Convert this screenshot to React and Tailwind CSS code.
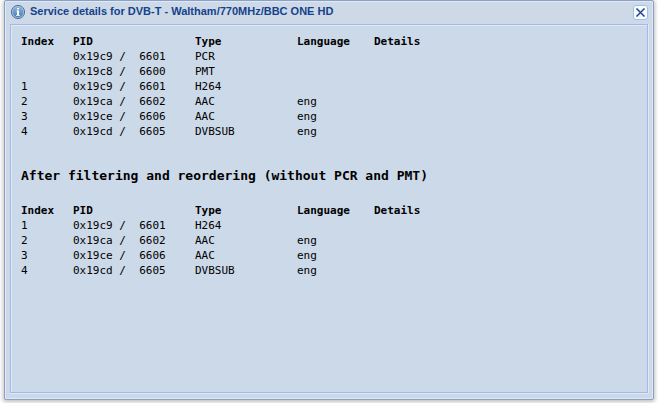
const COLS = "grid grid-cols-[52px_122px_102px_77px_100px] h-[15px] leading-[15px]";

const filtered = [
  ["1", "0x19c9 /  6601", "H264", ""],
  ["2", "0x19ca /  6602", "AAC", "eng"],
  ["3", "0x19ce /  6606", "AAC", "eng"],
  ["4", "0x19cd /  6605", "DVBSUB", "eng"],
];
const all = [
  ["", "0x19c9 /  6601", "PCR", ""],
  ["", "0x19c8 /  6600", "PMT", ""],
  ...filtered,
];

function StreamTable({ rows }) {
  return (
    <div>
      <div className={COLS + " font-bold"}>
        <span>Index</span>
        <span>PID</span>
        <span>Type</span>
        <span>Language</span>
        <span>Details</span>
      </div>
      {rows.map((row, i) => (
        <div key={i} className={COLS + " whitespace-pre"}>
          {row.map((cell, j) => (
            <span key={j}>{cell}</span>
          ))}
        </div>
      ))}
    </div>
  );
}

function InfoIcon() {
  return (
    <svg width="16" height="16" viewBox="0 0 16 16" className="-mt-px shrink-0">
      <defs>
        <linearGradient id="info" x1="0" y1="0" x2="0" y2="1">
          <stop offset="0" stopColor="#8fb5dd" />
          <stop offset="1" stopColor="#4a7db9" />
        </linearGradient>
      </defs>
      <circle cx="8" cy="8" r="6.6" fill="#a9c4e2" stroke="#4f729c" />
      <circle cx="8" cy="8" r="5.4" fill="url(#info)" />
      <path d="M7 4h2v1.6H7zM6.5 6.6H9V11h1v.8H6V11h1V7.4h-.5z" fill="#fff" />
    </svg>
  );
}

function CloseButton() {
  return (
    <button aria-label="Close" className="shrink-0">
      <svg width="15" height="15" viewBox="0 0 15 15" className="block">
        <rect x=".5" y=".5" width="14" height="14" rx="2.5" fill="#f8fbff" stroke="#a3bfe6" />
        <path d="M3.5 3.5l8 8M11.5 3.5l-8 8" stroke="#b9cff2" strokeWidth="2.2" />
        <path d="M3.5 3.5l8 8M11.5 3.5l-8 8" stroke="#243d8c" strokeWidth="1.1" />
      </svg>
    </button>
  );
}

export default function App() {
  return (
    <div className="h-[403px] w-[658px] overflow-hidden bg-white pl-1">
      <div className="flex h-[400px] w-[650px] flex-col rounded-[2px] border border-[#8ba1c4] bg-[#ced9e7] px-[5px] pb-[6px] shadow-[0_1px_4px_1px_rgba(0,0,0,0.25),inset_0_0_0_1px_#dfe8f6]">
        <div className="flex h-[23px] shrink-0 items-center">
          <InfoIcon />
          <span className="-mt-[2px] ml-[4px] flex-1 font-['Liberation_Sans',Arial,sans-serif] text-[11px] leading-[15px] font-bold text-[#15428b]">
            Service details for DVB-T - Waltham/770MHz/BBC ONE HD
          </span>
          <CloseButton />
        </div>
        <div className="flex-1 border border-[#a3b8ee] bg-[#ccd9e8] px-[10px] pt-[9px] font-['DejaVu_Sans_Mono',monospace] text-[11px] text-black shadow-[0_1px_0_#dfe8f6,1px_0_0_#dfe8f6,inset_1px_1px_0_#dfe8f6]">
          <StreamTable rows={all} />
          <h3 className="mt-[28px] mb-[19px] text-[13px] leading-[17px] font-bold">
            After filtering and reordering (without PCR and PMT)
          </h3>
          <StreamTable rows={filtered} />
        </div>
      </div>
    </div>
  );
}
